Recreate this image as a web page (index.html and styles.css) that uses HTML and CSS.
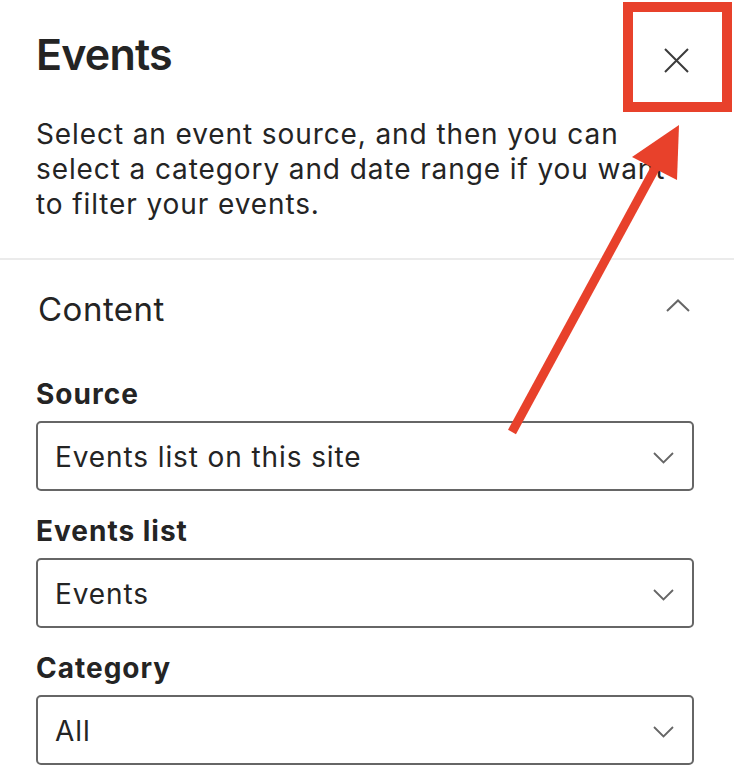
FILE: index.html
```html
<!DOCTYPE html>
<html lang="en">
<head>
<meta charset="utf-8">
<title>Events</title>
<link rel="stylesheet" href="styles.css">
</head>
<body>
<div class="panel">
  <header class="panel-header">
    <div class="title-row">
      <h1 class="title">Events</h1>
      <button class="close-btn" aria-label="Close">
        <svg width="25" height="25" viewBox="0 0 25 25"><path d="M1 1 L24 24 M24 1 L1 24" stroke="#3b3b3b" stroke-width="2" fill="none"/></svg>
      </button>
    </div>
    <p class="desc">Select an event source, and then you can select a category and date range if you want to filter your events.</p>
  </header>
  <section class="group">
    <div class="group-head">
      <h2 class="group-title">Content</h2>
      <svg class="chev-up" width="24" height="13" viewBox="0 0 24 13"><path d="M1 12 L12 1.5 L23 12" stroke="#666" stroke-width="2" fill="none"/></svg>
    </div>
    <div class="field">
      <label class="label">Source</label>
      <div class="select"><span>Events list on this site</span>
        <svg width="21" height="12" viewBox="0 0 21 12"><path d="M1 1 L10.5 10.5 L20 1" stroke="#666" stroke-width="1.8" fill="none"/></svg>
      </div>
    </div>
    <div class="field">
      <label class="label">Events list</label>
      <div class="select"><span>Events</span>
        <svg width="21" height="12" viewBox="0 0 21 12"><path d="M1 1 L10.5 10.5 L20 1" stroke="#666" stroke-width="1.8" fill="none"/></svg>
      </div>
    </div>
    <div class="field">
      <label class="label">Category</label>
      <div class="select"><span>All</span>
        <svg width="21" height="12" viewBox="0 0 21 12"><path d="M1 1 L10.5 10.5 L20 1" stroke="#666" stroke-width="1.8" fill="none"/></svg>
      </div>
    </div>
  </section>
</div>
<svg class="annotation" width="734" height="782" viewBox="0 0 734 782">
  <rect x="628" y="7" width="99" height="100" fill="none" stroke="#e8412b" stroke-width="10"/>
  <line x1="512" y1="432" x2="658" y2="163" stroke="#e8412b" stroke-width="9"/>
  <polygon points="679,125 632,157 677,180" fill="#e8412b"/>
</svg>
</body>
</html>
```

FILE: styles.css
```css
html, body {
  margin: 0;
  padding: 0;
  background: #ffffff;
}
body {
  width: 734px;
  height: 782px;
  overflow: hidden;
  position: relative;
  font-family: Inter, "Noto Sans", sans-serif;
  color: #242424;
}
.panel {
  display: flex;
  flex-direction: column;
}
.panel-header {
  padding: 28px 0 36px 36px;
  border-bottom: 2px solid #ebebeb;
}
.title-row {
  display: flex;
  justify-content: space-between;
  align-items: flex-start;
}
.title {
  margin: 0;
  font-size: 43px;
  line-height: 52px;
  font-weight: 600;
  letter-spacing: -0.8px;
}
.close-btn {
  border: 0;
  background: none;
  padding: 0;
  margin: 20px 45px 0 0;
  width: 25px;
  height: 25px;
  display: block;
}
.close-btn svg { display: block; }
.desc {
  margin: 37px 0 0 0;
  font-size: 28px;
  line-height: 35px;
  width: 655px;
  letter-spacing: 0.9px;
}
.group {
  padding: 29px 40px 0 36px;
}
.group-head {
  display: flex;
  justify-content: space-between;
  align-items: flex-start;
  margin-bottom: 46px;
}
.group-title {
  margin: 0;
  font-size: 33px;
  line-height: 40px;
  font-weight: 400;
  padding-left: 2px;
  letter-spacing: 0.5px;
}
.chev-up {
  margin: 10px 4px 0 0;
  display: block;
}
.field {
  display: flex;
  flex-direction: column;
  gap: 11px;
  margin-bottom: 21px;
}
.label {
  font-size: 28px;
  line-height: 35px;
  font-weight: 700;
  letter-spacing: 1px;
  position: relative;
  top: 2px;
}
.select {
  height: 70px;
  box-sizing: border-box;
  border: 2px solid #666;
  border-radius: 5px;
  display: flex;
  align-items: center;
  justify-content: space-between;
  padding: 3px 18px 0 17px;
  font-size: 28px;
  line-height: 35px;
  letter-spacing: 0.9px;
}
.select svg { display: block; }
.annotation {
  position: absolute;
  left: 0;
  top: 0;
  pointer-events: none;
}
```
